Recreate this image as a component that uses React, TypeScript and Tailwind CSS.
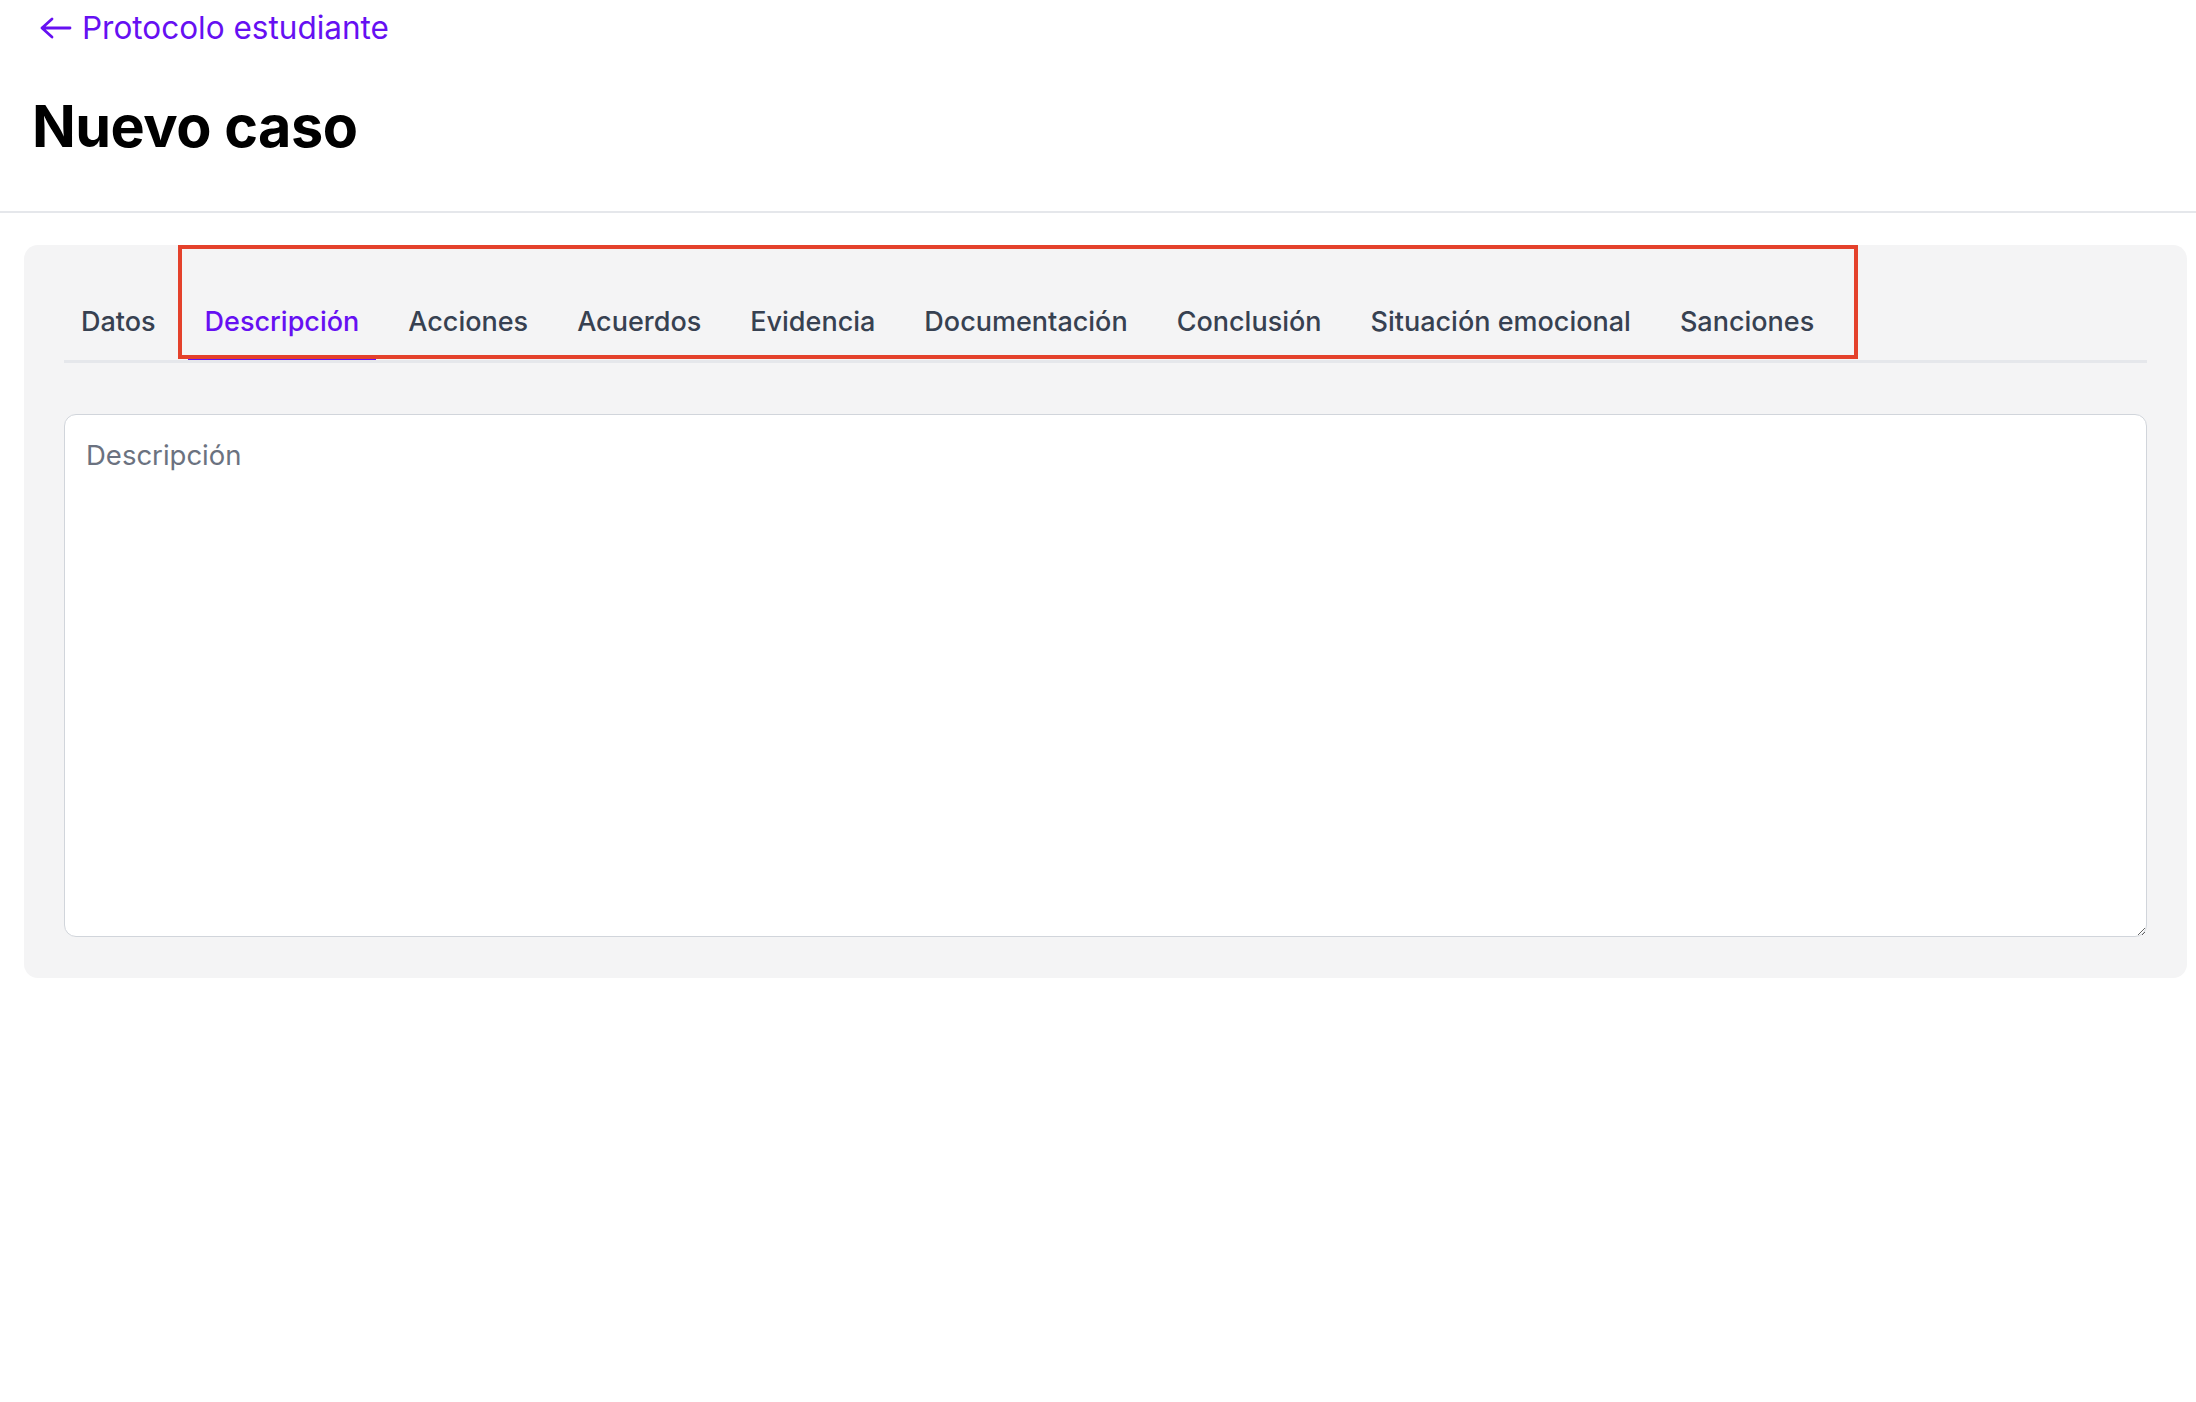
import React from "react";

const tabs = [
  "Datos",
  "Descripción",
  "Acciones",
  "Acuerdos",
  "Evidencia",
  "Documentación",
  "Conclusión",
  "Situación emocional",
  "Sanciones",
];

export default function App() {
  return (
    <div className="min-h-[1402px] bg-white font-['Inter','Noto_Sans',sans-serif]">
      <header className="border-b-2 border-[#e5e7eb] px-[32px] pt-[9px] pb-[51px]">
        <a href="#" className="flex items-center gap-[10px] pl-[8px] text-[31.5px] leading-[37px] text-[#6610f2]">
          <svg width="32" height="22" viewBox="0 0 32 22" fill="none" stroke="currentColor" strokeWidth="2.8" strokeLinecap="round" strokeLinejoin="round">
            <path d="M12 2 L2 11 L12 20 M2 11 H30" />
          </svg>
          <span>Protocolo estudiante</span>
        </a>
        <h1 className="mt-[47px] text-[57.5px] leading-[67px] font-bold text-black tracking-[-0.5px]">Nuevo caso</h1>
      </header>

      <div className="relative ml-[24px] mr-[9px] mt-[32px] rounded-[14px] bg-[#f4f4f5] px-[40px] pt-[41px] pb-[41px]">
        <nav className="flex gap-[15px] border-b-[3px] border-[#e5e7eb]">
          {tabs.map((t) => (
            <button
              key={t}
              className={
                t === "Descripción"
                  ? "border-b-[3px] border-[#6610f2] px-[17px] pt-[16px] pb-[15px] text-[27px] leading-[40px] font-medium text-[#6610f2]"
                  : "border-b-[3px] border-transparent px-[17px] pt-[16px] pb-[15px] text-[27px] leading-[40px] font-medium text-[#374151]"
              }
            >
              {t}
            </button>
          ))}
        </nav>
        <textarea
          placeholder="Descripción"
          className="mt-[51px] block h-[523px] w-full rounded-[12px] border-[1.5px] border-[#d1d5db] bg-white px-[21px] pt-[20px] pb-[20px] text-[27.5px] leading-[40px] text-[#111827] placeholder:text-[#6b7280] outline-none"
        />
        <div className="pointer-events-none absolute left-[154px] top-0 h-[114px] w-[1680px] border-[4.5px] border-[#e4412b]" />
      </div>
    </div>
  );
}
